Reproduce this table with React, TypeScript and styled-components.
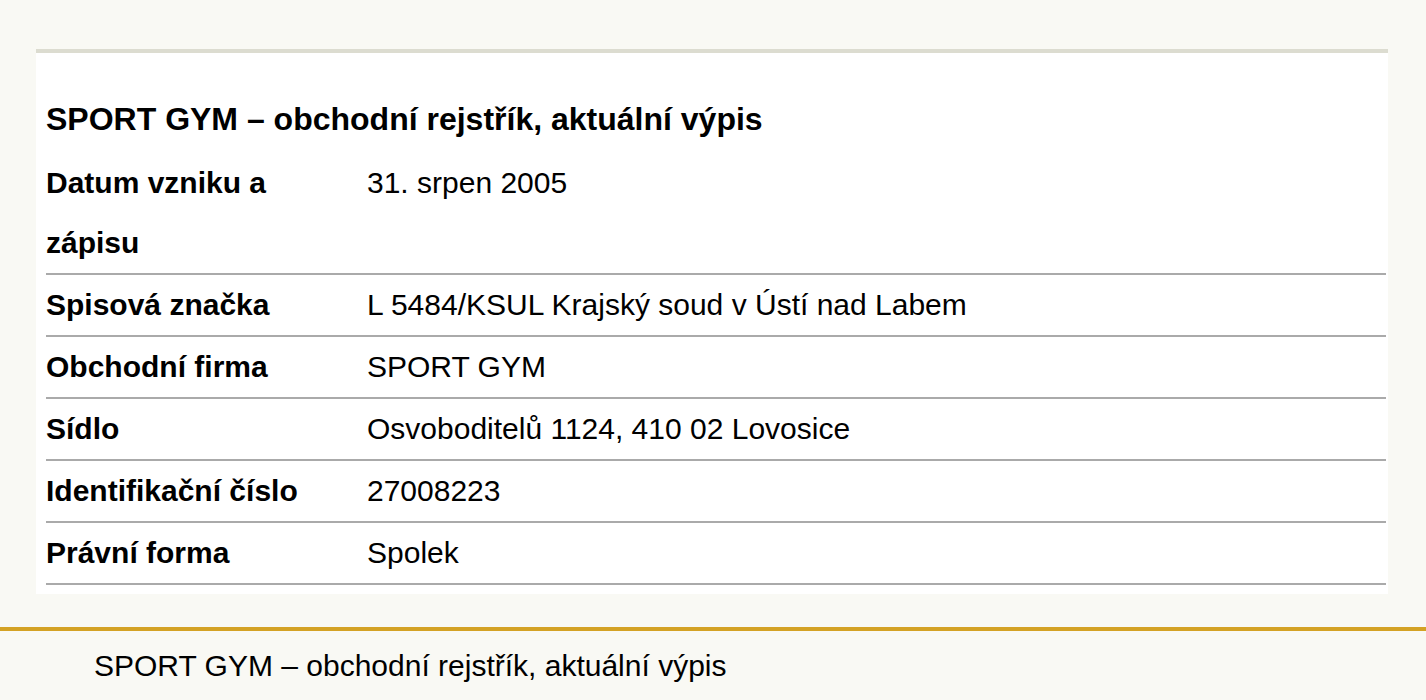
import React from "react";
import styled, { createGlobalStyle } from "styled-components";

const GlobalStyle = createGlobalStyle`
  html, body {
    margin: 0;
    padding: 0;
    background: #f9f9f4;
  }
  body {
    font-family: "Liberation Sans", Arial, sans-serif;
    color: #000;
  }
`;

const Page = styled.div`
  padding-top: 49px;
`;

const Card = styled.section`
  margin: 0 38px 0 36px;
  background: #fff;
  border-top: 4px solid #dcdcd0;
  padding: 34px 2px 9px 10px;
`;

const Title = styled.h1`
  margin: 0;
  font-size: 32px;
  font-weight: bold;
  line-height: 64px;
  height: 66px;
`;

const Row = styled.div`
  display: grid;
  grid-template-columns: 321px 1fr;
  border-bottom: 2px solid #aaa;
  font-size: 30px;
  line-height: 60px;
`;

const Label = styled.div`
  font-weight: bold;
  padding-right: 40px;
`;

const Value = styled.div``;

const Footer = styled.footer`
  margin-top: 33px;
  border-top: 4px solid #d4a224;
  padding: 18px 0 0 94px;
  font-size: 30px;
  height: 60px;
`;

const rows: [string, string][] = [
  ["Datum vzniku a zápisu", "31. srpen 2005"],
  ["Spisová značka", "L 5484/KSUL Krajský soud v Ústí nad Labem"],
  ["Obchodní firma", "SPORT GYM"],
  ["Sídlo", "Osvoboditelů 1124, 410 02 Lovosice"],
  ["Identifikační číslo", "27008223"],
  ["Právní forma", "Spolek"],
];

const App = () => {
  return (
    <Page>
      <GlobalStyle />
      <Card>
        <Title>SPORT GYM – obchodní rejstřík, aktuální výpis</Title>
        {rows.map(([label, value]) => (
          <Row key={label}>
            <Label>{label}</Label>
            <Value>{value}</Value>
          </Row>
        ))}
      </Card>
      <Footer>SPORT GYM – obchodní rejstřík, aktuální výpis</Footer>
    </Page>
  );
};

export default App;
